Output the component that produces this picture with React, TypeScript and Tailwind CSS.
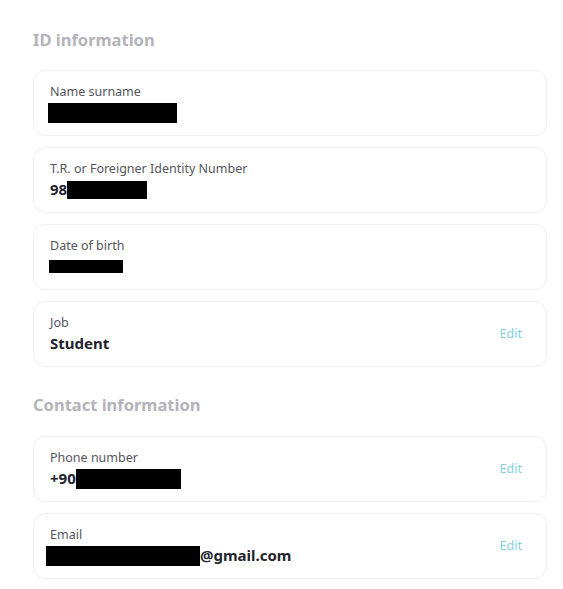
import React from "react";

type Row = {
  label: string;
  prefix?: string;
  suffix?: string;
  mask?: string; // tailwind classes for the redaction box
  value?: string;
  editable?: boolean;
};

const idRows: Row[] = [
  { label: "Name surname", mask: "w-[129px] h-[20px] ml-[-2px]" },
  { label: "T.R. or Foreigner Identity Number", prefix: "98", mask: "w-[80px] h-[18px]" },
  { label: "Date of birth", mask: "w-[74px] h-[13px] ml-[-1px]" },
  { label: "Job", value: "Student", editable: true },
];

const contactRows: Row[] = [
  { label: "Phone number", prefix: "+90", mask: "w-[105px] h-[20px]", editable: true },
  { label: "Email", mask: "w-[154px] h-[20px] ml-[-4px]", suffix: "@gmail.com", editable: true },
];

function InfoCard({ row }: { row: Row }) {
  return (
    <div className="flex h-[66px] items-center justify-between rounded-[12px] border border-[#efeff1] bg-white pl-[16px] pr-[24px]">
      <div className="flex flex-col">
        <span className="text-[12.5px] leading-[16px] text-[#55555c]">{row.label}</span>
        <div className="mt-[3px] flex h-[20px] items-center text-[15px] font-bold text-[#23232e]">
          {row.prefix && <span>{row.prefix}</span>}
          {row.mask && <span className={`inline-block bg-black ${row.mask}`} />}
          {row.value && <span>{row.value}</span>}
          {row.suffix && <span>{row.suffix}</span>}
        </div>
      </div>
      {row.editable && <span className="text-[12.5px] text-[#86cfe3]">Edit</span>}
    </div>
  );
}

export default function App() {
  return (
    <div
      className="min-h-screen bg-white px-[33px] pt-[30px]"
      style={{ fontFamily: "'Noto Sans', Lato, sans-serif" }}
    >
      <h2 className="mb-[20px] h-[20px] text-[16.5px] font-bold leading-[20px] text-[#b3b3b9]">ID information</h2>
      <div className="flex w-[514px] flex-col gap-[11px]">
        {idRows.map((r) => (
          <InfoCard key={r.label} row={r} />
        ))}
      </div>

      <h2 className="mb-[21px] mt-[28px] h-[20px] text-[16.5px] font-bold leading-[20px] text-[#b3b3b9]">
        Contact information
      </h2>
      <div className="flex w-[514px] flex-col gap-[11px]">
        {contactRows.map((r) => (
          <InfoCard key={r.label} row={r} />
        ))}
      </div>
    </div>
  );
}
